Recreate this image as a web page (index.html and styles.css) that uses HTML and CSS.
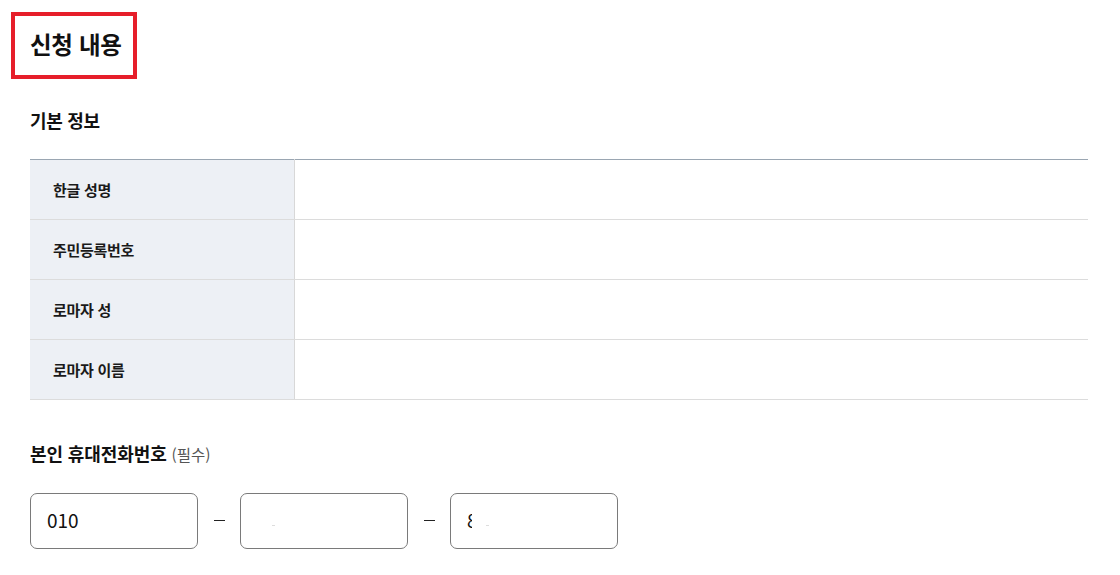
FILE: index.html
```html
<!DOCTYPE html>
<html lang="ko">
<head>
<meta charset="utf-8">
<title>신청 내용</title>
<link rel="stylesheet" href="styles.css">
</head>
<body>
<main class="page">
  <h2 class="page-title">신청 내용</h2>

  <h3 class="section-title">기본 정보</h3>
  <table class="info-table">
    <tr><th>한글 성명</th><td></td></tr>
    <tr><th>주민등록번호</th><td></td></tr>
    <tr><th>로마자 성</th><td></td></tr>
    <tr><th>로마자 이름</th><td></td></tr>
  </table>

  <h3 class="section-title phone-title">본인 휴대전화번호 <span class="req">(필수)</span></h3>
  <div class="phone-row">
    <div class="phone-field">010</div>
    <span class="dash"><span class="dash-line"></span></span>
    <div class="phone-field"><span class="dot"></span></div>
    <span class="dash"><span class="dash-line"></span></span>
    <div class="phone-field"><span class="partial">8<span class="mask"></span></span><span class="dot dot-b"></span></div>
  </div>
</main>
</body>
</html>
```

FILE: styles.css
```css
* { box-sizing: border-box; }
html, body {
  margin: 0;
  padding: 0;
  background: #fff;
}
body {
  font-family: "Noto Sans CJK KR", "Noto Sans", sans-serif;
  color: #111;
}
.page {
  padding: 12px 32px 0 30px;
}
.page-title {
  display: block;
  width: 126px;
  margin: 0 0 0 -19px;
  height: 67px;
  padding: 0 0 0 15px;
  border: 4px solid #e61e2a;
  font-size: 23.5px;
  line-height: 57px;
  font-weight: 700;
  letter-spacing: -0.3px;
  white-space: nowrap;
}
.section-title {
  margin: 29px 0 0;
  font-size: 18px;
  line-height: 24px;
  font-weight: 700;
  letter-spacing: -0.3px;
}
.info-table {
  margin-top: 27px;
  width: 1058px;
  border-collapse: collapse;
  border-top: 1px solid #9aa6b2;
}
.info-table th,
.info-table td {
  height: 60px;
  border-bottom: 1px solid #dcdcdc;
  padding: 0;
}
.info-table th {
  width: 264px;
  background: #edf0f5;
  border-right: 1px solid #d8d8d8;
  text-align: left;
  padding-left: 23px;
  font-size: 15px;
  font-weight: 700;
  letter-spacing: -0.3px;
  color: #1a1a1a;
}
.phone-title {
  margin-top: 41px;
  letter-spacing: -0.1px;
}
.req {
  font-size: 15.5px;
  font-weight: 400;
  color: #555;
  letter-spacing: 0;
}
.phone-row {
  margin-top: 27px;
  display: flex;
  align-items: center;
}
.phone-field {
  width: 168px;
  height: 56px;
  border: 1px solid #7a7a7a;
  border-radius: 7px;
  padding: 0 16px 3px;
  display: flex;
  align-items: center;
  font-size: 19px;
  color: #111;
}
.dash {
  width: 42px;
  display: flex;
  justify-content: center;
  align-items: center;
}
.dash-line {
  display: block;
  width: 11px;
  height: 1px;
  background: #222;
  margin-top: -2px;
}
.partial {
  position: relative;
  display: inline-block;
}
.mask {
  position: absolute;
  top: 0;
  bottom: 0;
  right: 0;
  width: 55%;
  background: #fff;
}
.dot {
  display: inline-block;
  width: 3px;
  height: 1px;
  background: #ddd;
  margin-left: 15px;
  margin-top: 12px;
}
.dot-b {
  margin-left: 8px;
}
```
